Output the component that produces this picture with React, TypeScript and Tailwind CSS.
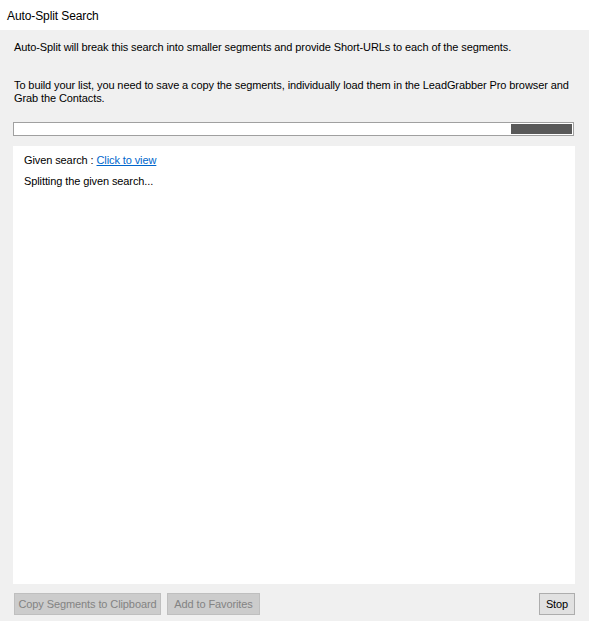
export default function App() {
  return (
    <div
      className="w-[589px] h-[621px] flex flex-col bg-[#f0f0f0] text-[11px] tracking-[-0.1px] text-black"
      style={{ fontFamily: '"Liberation Sans", Arial, sans-serif' }}
    >
      <div className="h-[30px] shrink-0 bg-white flex items-center pl-[7px] pt-[1px] text-[12px] tracking-[-0.1px]">
        Auto-Split Search
      </div>

      <div className="flex-1 flex flex-col px-[13px]">
        <p className="mt-[10px] pl-[1px] leading-[15px]">
          Auto-Split will break this search into smaller segments and provide Short-URLs to each of the segments.
        </p>
        <p className="mt-[24px] pl-[1px] leading-[13px] pr-[2px]">
          To build your list, you need to save a copy the segments, individually load them in the LeadGrabber Pro browser
          and Grab the Contacts.
        </p>

        <div className="mt-[17px] h-[14px] w-[561px] border border-[#a0a0a0] bg-white p-[1px] flex justify-end">
          <div className="w-[61px] h-full bg-[#595959]" />
        </div>

        <div className="mt-[10px] h-[438px] w-[562px] bg-white px-[11px] pt-[7px] flex flex-col gap-[7px] leading-[14px]">
          <div>
            Given search :{' '}
            <a href="#" className="text-[#0066cc] underline">
              Click to view
            </a>
          </div>
          <div>Splitting the given search...</div>
        </div>

        <div className="mt-[9px] flex items-center w-[562px]">
          <button className="h-[22px] w-[147px] ml-[1px] border border-[#bfbfbf] bg-[#cccccc] text-[#838383]">
            Copy Segments to Clipboard
          </button>
          <button className="h-[22px] w-[93px] ml-[6px] border border-[#bfbfbf] bg-[#cccccc] text-[#838383]">
            Add to Favorites
          </button>
          <button className="h-[22px] w-[36px] ml-auto border border-[#adadad] bg-[#e1e1e1]">Stop</button>
        </div>
      </div>
    </div>
  )
}
